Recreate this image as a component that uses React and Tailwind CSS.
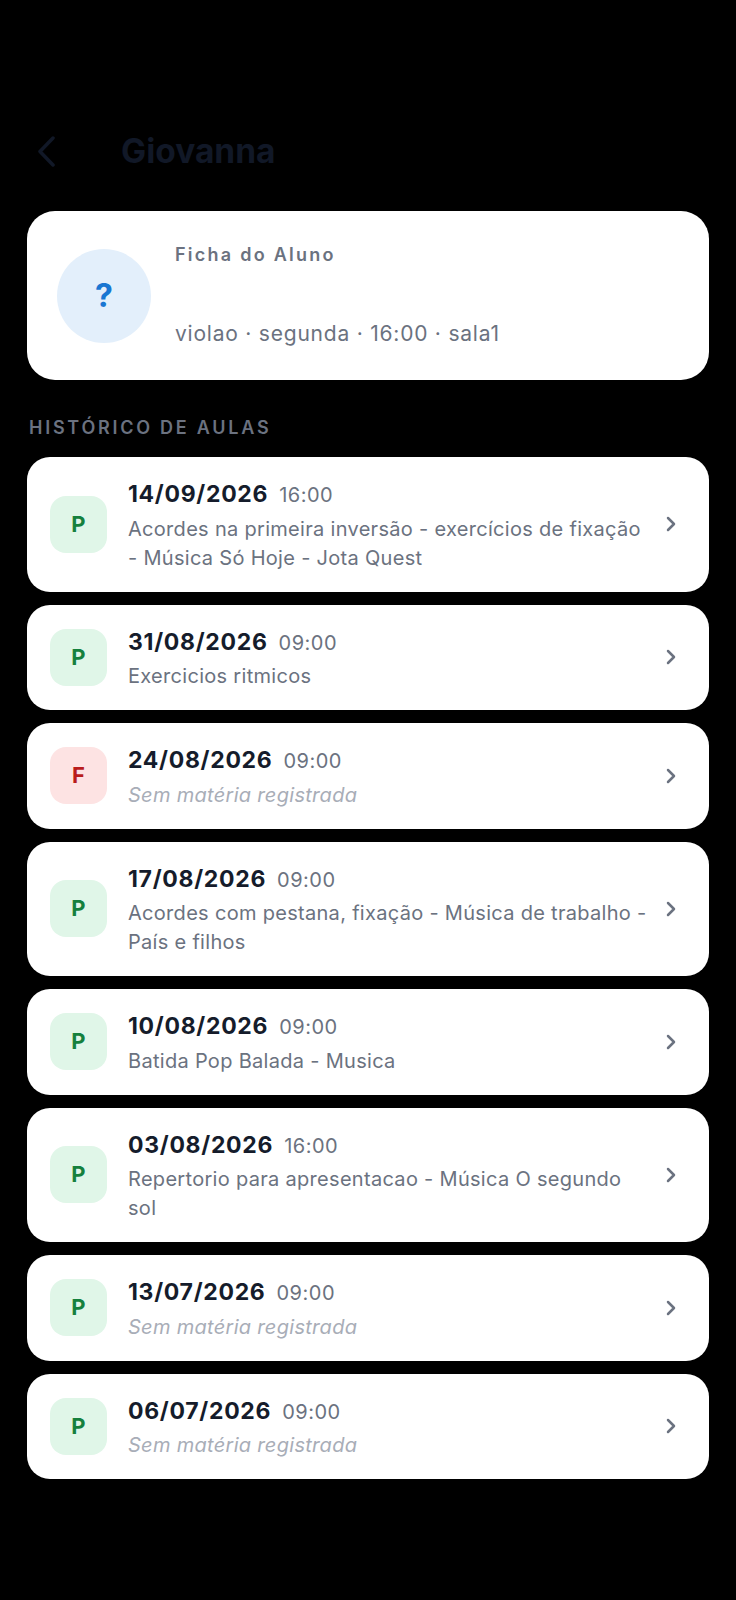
import { ChevronRight } from "lucide-react";

const aulas = [
    { data: "14/09/2026", hora: "16:00", status: "P", materia: "Acordes na primeira inversão - exercícios de fixação - Música Só Hoje - Jota Quest" },
    { data: "31/08/2026", hora: "09:00", status: "P", materia: "Exercicios ritmicos" },
    { data: "24/08/2026", hora: "09:00", status: "F", materia: null },
    { data: "17/08/2026", hora: "09:00", status: "P", materia: "Acordes com pestana, fixação - Música de trabalho - País e filhos" },
    { data: "10/08/2026", hora: "09:00", status: "P", materia: "Batida Pop Balada - Musica" },
    { data: "03/08/2026", hora: "16:00", status: "P", materia: "Repertorio para apresentacao - Música O segundo sol" },
    { data: "13/07/2026", hora: "09:00", status: "P", materia: null },
    { data: "06/07/2026", hora: "09:00", status: "P", materia: null },
];

const AulaCard = ({ aula }) => {
    const presente = aula.status === "P";

    return (
        <div className="flex items-center rounded-[23px] bg-white pl-[23px] pr-[26px] py-[19px]">
            <div
                className={
                    presente
                        ? "flex h-[57px] w-[57px] shrink-0 items-center justify-center rounded-[16px] bg-[#e0f6e8] text-[22px] font-bold text-[#15803d]"
                        : "flex h-[57px] w-[57px] shrink-0 items-center justify-center rounded-[16px] bg-[#fde3e3] text-[22px] font-bold text-[#b91c1c]"
                }
            >
                {aula.status}
            </div>
            <div className="ml-[21px] min-w-0 flex-1">
                <div className="mt-[1px] flex items-baseline gap-[11px]">
                    <span className="text-[23px] leading-[35.5px] font-bold tracking-[0.7px] text-[#151c2b]">{aula.data}</span>
                    <span className="text-[20px] leading-[35.5px] tracking-[0.5px] text-[#6b7280]">{aula.hora}</span>
                </div>
                {aula.materia ? (
                    <p className="mt-[1px] text-[20px] leading-[29px] tracking-[0.3px] text-[#6b7280]">{aula.materia}</p>
                ) : (
                    <p className="mt-[1px] text-[20px] leading-[29px] tracking-[0.3px] text-[#a8adb7] italic">Sem matéria registrada</p>
                )}
            </div>
            <ChevronRight className="ml-[6px] h-[24px] w-[24px] shrink-0 text-[#6b7280]" strokeWidth={2.5} />
        </div>
    );
};

export default function App() {
    return (
        <div className="min-h-[1600px] bg-black px-[27px] font-['Inter',sans-serif]">
            <div className="flex items-center pt-[127px] pb-[36px]">
                <svg className="ml-[10px] h-[31px] w-[18px] text-[#111827]" viewBox="0 0 18 31" fill="none" stroke="currentColor" strokeWidth="3.5" strokeLinecap="round" strokeLinejoin="round">
                    <path d="M16 2 L3 15.5 L16 29" />
                </svg>
                <h1 className="ml-[66px] text-[33.5px] leading-[48px] font-bold text-[#111827]">Giovanna</h1>
            </div>
            <div className="flex h-[169px] items-center rounded-[28px] bg-white px-[30px]">
                <div className="flex h-[94px] w-[94px] shrink-0 items-center justify-center rounded-full bg-[#e3effb] text-[32px] font-bold text-[#1976d2]">?</div>
                <div className="ml-[24px] flex h-[105px] flex-col justify-between">
                    <p className="text-[18px] leading-[24px] font-semibold tracking-[2.25px] text-[#6b7280]">Ficha do Aluno</p>
                    <p className="text-[21px] leading-[28px] tracking-[0.78px] text-[#6b7280]">violao · segunda · 16:00 · sala1</p>
                </div>
            </div>
            <h2 className="mt-[35px] mb-[16px] ml-[2px] text-[18px] leading-[26px] font-semibold tracking-[2.75px] text-[#6b7280]">HISTÓRICO DE AULAS</h2>
            <div className="flex flex-col gap-[13px]">
                {aulas.map((aula) => (
                    <AulaCard key={aula.data} aula={aula} />
                ))}
            </div>
        </div>
    );
}
